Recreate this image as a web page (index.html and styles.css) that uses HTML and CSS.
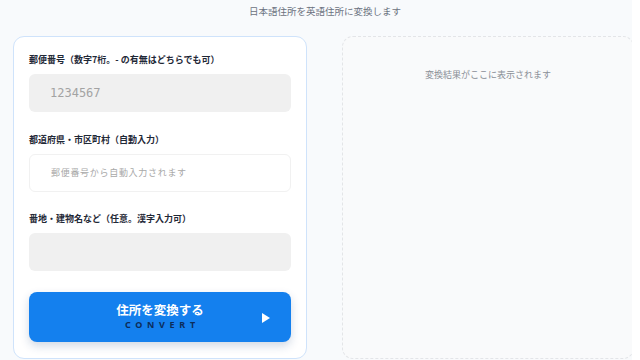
FILE: index.html
```html
<!DOCTYPE html>
<html lang="ja">
<head>
<meta charset="utf-8">
<link rel="stylesheet" href="styles.css">
</head>
<body>
<div class="page">
  <header class="title">日本語住所を英語住所に変換します</header>
  <main class="row">
    <section class="card">
      <div class="field">
        <label class="label">郵便番号（数字7桁。- の有無はどちらでも可）</label>
        <div class="input filled"><span class="zip">1234567</span></div>
      </div>
      <div class="field">
        <label class="label">都道府県・市区町村（自動入力）</label>
        <div class="input plain"><span class="ph">郵便番号から自動入力されます</span></div>
      </div>
      <div class="field">
        <label class="label">番地・建物名など（任意。漢字入力可）</label>
        <div class="input filled"></div>
      </div>
      <button class="btn">
        <span class="btn-main">住所を変換する</span>
        <span class="btn-sub">CONVERT</span>
        <svg class="play" width="8" height="10" viewBox="0 0 8 10"><path d="M0 0 L8 5 L0 10 Z" fill="#fff"/></svg>
      </button>
    </section>
    <section class="result">
      <p class="result-text">変換結果がここに表示されます</p>
    </section>
  </main>
</div>
</body>
</html>
```
FILE: styles.css
```css
html, body {
  margin: 0;
  padding: 0;
  background: #ffffff;
}
body {
  font-family: "Noto Sans CJK JP", "Noto Sans", sans-serif;
  width: 640px;
  height: 360px;
  overflow: hidden;
}
.page {
  width: 632px;
  height: 360px;
  background: #f8fafc;
  overflow: hidden;
}
.title {
  height: 36px;
  text-align: center;
  font-size: 9.5px;
  line-height: 22px;
  color: #6b7280;
  padding-left: 18px;
  box-sizing: border-box;
}
.row {
  display: flex;
  gap: 35px;
  padding-left: 13px;
}
.card {
  width: 294px;
  height: 323px;
  box-sizing: border-box;
  background: #fff;
  border: 1px solid #cfe3fb;
  border-radius: 11px;
  padding: 16px 15px;
  display: flex;
  flex-direction: column;
  flex-shrink: 0;
}
.field {
  display: flex;
  flex-direction: column;
  gap: 7px;
  margin-bottom: 20.5px;
}
.label {
  font-size: 9px;
  line-height: 14px;
  font-weight: 700;
  color: #1f2937;
}
.input {
  height: 38px;
  box-sizing: border-box;
  border-radius: 6px;
  display: flex;
  align-items: center;
  padding-left: 21px;
}
.filled {
  background: #f0f0f0;
}
.plain {
  background: #fff;
  border: 1px solid #f1f1f1;
  padding-left: 21px;
}
.zip {
  font-family: "DejaVu Sans Mono", monospace;
  font-size: 12px;
  color: #a3a3a3;
}
.ph {
  font-size: 9px;
  letter-spacing: 0.7px;
  color: #a8a8a8;
}
.btn {
  position: relative;
  margin-top: 0;
  height: 50px;
  border: none;
  border-radius: 8px;
  background: #1480ee;
  box-shadow: 0 4px 10px rgba(20, 60, 120, 0.2);
  display: flex;
  flex-direction: column;
  align-items: center;
  justify-content: center;
  padding: 0;
  font-family: "Noto Sans CJK JP", sans-serif;
}
.btn-main {
  font-size: 12.5px;
  line-height: 17px;
  font-weight: 700;
  color: #fff;
  margin-top: -1px;
}
.btn-sub {
  font-family: "Noto Sans", sans-serif;
  font-size: 9px;
  line-height: 12px;
  font-weight: 700;
  letter-spacing: 4.7px;
  color: #0c2d5a;
  padding-left: 4.7px;
  margin-top: 1px;
}
.play {
  position: absolute;
  right: 21px;
  top: 21px;
}
.result {
  width: 292px;
  height: 323px;
  box-sizing: border-box;
  background: #f9fafb;
  border: 1px dashed #e3e5e8;
  border-radius: 11px;
  flex-shrink: 0;
}
.result-text {
  margin: 31px 0 0;
  text-align: center;
  font-size: 9px;
  line-height: 14px;
  color: #8a8f97;
}
```
